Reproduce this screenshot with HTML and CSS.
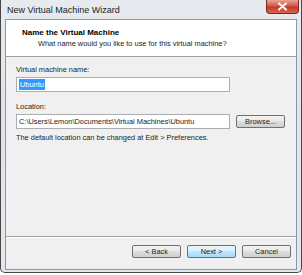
FILE: index.html
```html
<!DOCTYPE html>
<html lang="en">
<head>
    <meta charset="UTF-8">
    <title>New Virtual Machine Wizard</title>
    <link rel="stylesheet" href="styles.css">
</head>
<body>
    <div class="window">
        <div class="titlebar">
            <span class="title">New Virtual Machine Wizard</span>
            <div class="close">
                <svg width="11" height="9" viewBox="0 0 11 9">
                    <path d="M2 1.5 L9 7.5 M9 1.5 L2 7.5" stroke="#fff" stroke-width="2" stroke-linecap="round"/>
                </svg>
            </div>
        </div>
        <div class="client">
            <div class="header">
                <div class="header-title">Name the Virtual Machine</div>
                <div class="header-sub">What name would you like to use for this virtual machine?</div>
            </div>
            <div class="content">
                <div class="label">Virtual machine name:</div>
                <div class="field"><span class="selected">Ubuntu</span></div>
                <div class="label location-label">Location:</div>
                <div class="row">
                    <div class="field">C:\Users\Lemon\Documents\Virtual Machines\Ubuntu</div>
                    <button class="btn browse">Browse...</button>
                </div>
                <div class="hint">The default location can be changed at Edit &gt; Preferences.</div>
            </div>
            <div class="footer">
                <button class="btn">&lt; Back</button>
                <button class="btn default">Next &gt;</button>
                <button class="btn cancel">Cancel</button>
            </div>
        </div>
    </div>
</body>
</html>
```

FILE: styles.css
```css
body {
    margin: 0;
    background-color: #fff;
    font-family: 'Liberation Sans', Arial, sans-serif;
    font-size: 8px;
    color: #222;
}

.window {
    width: 302px;
    height: 273px;
    box-sizing: border-box;
    border: 1px solid #474747;
    border-top: none;
    border-radius: 0 0 5px 5px;
    background: linear-gradient(to bottom, #e7ebef 0%, #dfe5eb 40%, #e3e8ed 100%);
    padding: 0 4px 2px 4px;
    display: flex;
    flex-direction: column;
}

.titlebar {
    height: 19px;
    display: flex;
    align-items: flex-start;
    justify-content: space-between;
}

.title {
    font-size: 9px;
    color: #1b1b1b;
    padding: 5px 0 0 2px;
}

.close {
    width: 33px;
    height: 14px;
    margin-right: -2px;
    box-sizing: border-box;
    border: 1px solid #7a2a22;
    border-top: none;
    border-radius: 0 0 4px 4px;
    background: linear-gradient(to bottom, #e8a497 0%, #d4574a 45%, #c23a2a 55%, #d8664f 100%);
    display: flex;
    justify-content: center;
    align-items: center;
}

.client {
    flex: 1;
    border: 1px solid #8b97a3;
    background-color: #f0f0f0;
    display: flex;
    flex-direction: column;
}

.header {
    height: 37px;
    box-sizing: border-box;
    background-color: #fff;
    border-bottom: 1px solid #a0a0a0;
    padding: 8px 0 0 16px;
}

.header-title {
    font-weight: bold;
    font-size: 8px;
    color: #000;
}

.header-sub {
    margin: 2px 0 0 16px;
    font-size: 7.4px;
}

.content {
    flex: 1;
    padding: 8px 10px 0 10px;
}

.label {
    font-size: 7.4px;
    margin-bottom: 3px;
}

.location-label {
    margin-top: 10px;
}

.field {
    width: 214px;
    height: 15px;
    box-sizing: border-box;
    border: 1px solid #abadb3;
    background-color: #fff;
    font-size: 7.4px;
    line-height: 13px;
    padding-left: 2px;
    white-space: nowrap;
}

.selected {
    background-color: #3399ff;
    color: #fff;
    padding: 1px 1px;
}

.row {
    display: flex;
    align-items: center;
    gap: 6px;
}

.hint {
    font-size: 7.4px;
    margin-top: 4px;
}

.btn {
    width: 49px;
    height: 13px;
    padding: 0;
    box-sizing: border-box;
    border: 1px solid #707070;
    border-radius: 2px;
    background: linear-gradient(to bottom, #f2f2f2 0%, #ebebeb 45%, #dddddd 50%, #cfcfcf 100%);
    font-family: 'Liberation Sans', Arial, sans-serif;
    font-size: 7.4px;
    color: #1e1e1e;
}

.btn.default {
    border-color: #3c7fb1;
    background: linear-gradient(to bottom, #eaf6fd 0%, #d9f0fc 45%, #bee6fd 50%, #a7d9f5 100%);
}

.footer {
    height: 24px;
    border-top: 1px solid #a0a0a0;
    box-shadow: inset 0 1px 0 #fff;
    display: flex;
    justify-content: flex-end;
    align-items: flex-start;
    padding: 8px 5px 0 0;
    gap: 6px;
}
```
